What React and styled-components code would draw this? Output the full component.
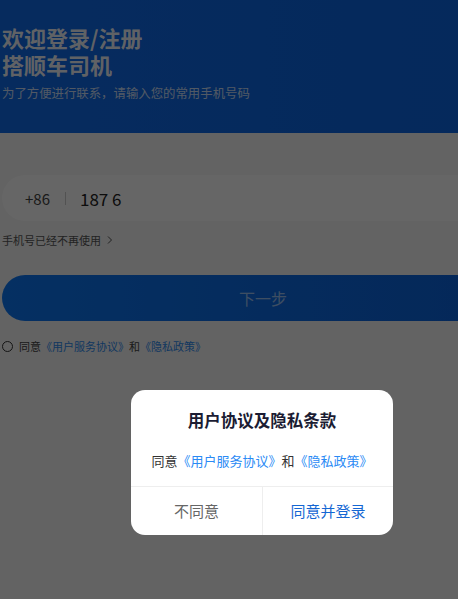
import React from "react"
import styled, { createGlobalStyle } from "styled-components"

const GlobalStyle = createGlobalStyle`
  html, body {
    margin: 0;
    padding: 0;
    overflow: hidden;
    background: #f7f7f7;
  }
  * {
    box-sizing: border-box;
  }
  body {
    font-family: "Noto Sans CJK SC", "Noto Sans", sans-serif;
  }
`

export default function App() {
  return (
    <>
      <GlobalStyle />
      <P.Frame>
        <P.Page>
          <P.Header>
            <P.Title>欢迎登录/注册</P.Title>
            <P.Title>搭顺车司机</P.Title>
            <P.Sub>为了方便进行联系，请输入您的常用手机号码</P.Sub>
          </P.Header>

          <P.Body>
            <P.PhoneBox>
              <P.Code>+86</P.Code>
              <P.Divider />
              <P.Number>187 6</P.Number>
            </P.PhoneBox>
            <P.Hint>
              手机号已经不再使用
              <P.Chevron viewBox="0 0 8 10">
                <path d="M2 1.5 L5.5 5 L2 8.5" fill="none" stroke="currentColor" strokeWidth="1" />
              </P.Chevron>
            </P.Hint>
            <P.NextButton>下一步</P.NextButton>
            <P.Agree>
              <P.Radio />
              同意<P.Link>《用户服务协议》</P.Link>和<P.Link>《隐私政策》</P.Link>
            </P.Agree>
          </P.Body>

          <D.Overlay>
            <D.Dialog>
              <D.Title>用户协议及隐私条款</D.Title>
              <D.Text>
                同意<D.Link>《用户服务协议》</D.Link>和<D.Link>《隐私政策》</D.Link>
              </D.Text>
              <D.Actions>
                <D.Action>不同意</D.Action>
                <D.Action primary>同意并登录</D.Action>
              </D.Actions>
            </D.Dialog>
          </D.Overlay>
        </P.Page>
      </P.Frame>
    </>
  )
}

const P = {
  Frame: styled.div`
    width: 100vw;
    height: 100vh;
    overflow: hidden;
  `,
  Page: styled.div`
    position: relative;
    width: 524px;
    height: 924px;
    background: #f7f7f7;
  `,
  Header: styled.div`
    height: 133px;
    padding: 24px 0 0 2px;
    background: linear-gradient(90deg, #106cec 0%, #0c66e4 100%);
    color: rgba(255, 255, 255, 0.95);
  `,
  Title: styled.div`
    font-size: 22px;
    font-weight: 700;
    line-height: 27px;
  `,
  Sub: styled.div`
    margin-top: 5px;
    font-size: 12.4px;
    line-height: 20px;
    color: rgba(255, 255, 255, 0.8);
  `,
  Body: styled.div`
    padding: 42px 0 0 2px;
  `,
  PhoneBox: styled.div`
    display: flex;
    align-items: center;
    height: 46px;
    border-radius: 23px;
    background: #fff;
    padding-left: 23px;
  `,
  Code: styled.span`
    font-size: 15px;
    color: #444;
  `,
  Divider: styled.span`
    width: 1px;
    height: 13px;
    background: #ccc;
    margin: 0 14px 0 15px;
  `,
  Number: styled.span`
    font-size: 17px;
    color: #222;
  `,
  Hint: styled.div`
    display: flex;
    align-items: center;
    margin-top: 9px;
    font-size: 11px;
    line-height: 20px;
    color: #555;
  `,
  Chevron: styled.svg`
    width: 8px;
    height: 10px;
    margin-left: 5px;
  `,
  NextButton: styled.div`
    display: flex;
    align-items: center;
    justify-content: center;
    margin-top: 25px;
    height: 46px;
    border-radius: 23px;
    background: linear-gradient(90deg, #0e78f5 0%, #0c62dc 100%);
    color: rgba(255, 255, 255, 0.6);
    font-size: 16px;
  `,
  Agree: styled.div`
    display: flex;
    align-items: center;
    margin-top: 15px;
    font-size: 11px;
    line-height: 20px;
    color: #444;
  `,
  Radio: styled.span`
    width: 11px;
    height: 11px;
    border: 1px solid #333;
    border-radius: 50%;
    margin-right: 6px;
  `,
  Link: styled.span`
    color: #2f8cf0;
  `,
}

const D = {
  Overlay: styled.div`
    position: absolute;
    inset: 0;
    display: flex;
    align-items: center;
    justify-content: center;
    background: rgba(0, 0, 0, 0.6);
  `,
  Dialog: styled.div`
    width: 262px;
    border-radius: 14px;
    background: #fff;
    overflow: hidden;
  `,
  Title: styled.div`
    padding-top: 18px;
    text-align: center;
    font-size: 16.5px;
    font-weight: 700;
    line-height: 24px;
    color: #1b1c33;
  `,
  Text: styled.div`
    margin-top: 19px;
    padding-bottom: 15px;
    text-align: center;
    font-size: 13px;
    line-height: 20px;
    color: #333;
    border-bottom: 1px solid #eee;
  `,
  Link: styled.span`
    color: #2a8af5;
  `,
  Actions: styled.div`
    display: grid;
    grid-template-columns: 1fr 1fr;
    height: 48px;
  `,
  Action: styled.div`
    display: flex;
    align-items: center;
    justify-content: center;
    font-size: 15px;
    color: ${(p) => (p.primary ? "#1567d3" : "#666")};
    & + & {
      border-left: 1px solid #eee;
    }
  `,
}
